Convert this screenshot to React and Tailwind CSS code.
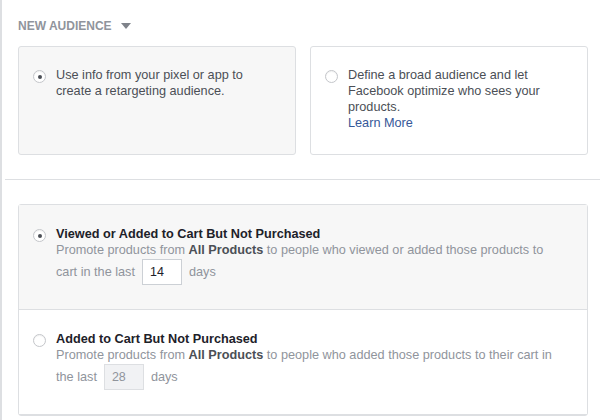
const font = { fontFamily: "Helvetica, 'Liberation Sans', Arial, sans-serif" };

const Radio = ({ checked }) => (
  <span className="mt-[3px] flex h-[13px] w-[13px] shrink-0 items-center justify-center rounded-full border border-[#c4c6ca] bg-white shadow-[inset_0_1px_1px_rgba(0,0,0,0.06)]">
    {checked && <span className="h-[4px] w-[4px] rounded-full bg-[#4b4f56]" />}
  </span>
);

const DaysInput = ({ value, disabled }) => (
  <span
    className={`mx-[7px] inline-flex h-[26px] w-[40px] items-center border px-[7px] align-middle text-[12.5px] ${
      disabled ? "border-[#dddfe2] bg-[#f1f2f4] text-[#90949c]" : "border-[#ccd0d5] bg-white text-[#1d2129]"
    }`}
  >
    {value}
  </span>
);

export default function App() {
  return (
    <div style={font} className="h-[420px] w-[600px] overflow-hidden border-l-[2px] border-[#dddfe2] bg-white text-[12.7px] text-[#4b4f56]">
      <div className="flex items-center gap-[9px] pl-[16px] pt-[17px] text-[12px] font-bold text-[#90949c]">
        NEW AUDIENCE
        <svg width="10" height="6" viewBox="0 0 10 6"><path d="M0 0h10L5 6z" fill="#7f838a" /></svg>
      </div>
      <div className="mt-[11px] flex gap-[14px] pl-[16px] pr-[12px]">
        <div className="flex h-[109px] flex-1 gap-[10px] rounded-[3px] border border-[#dddfe2] bg-[#f7f7f7] pl-[14px] pr-[8px] pt-[20px] leading-[16px]">
          <Radio checked />
          <span>Use info from your pixel or app to<br />create a retargeting audience.</span>
        </div>
        <div className="flex h-[109px] flex-1 gap-[10px] rounded-[3px] border border-[#dddfe2] bg-white pl-[14px] pr-[8px] pt-[20px] leading-[16px]">
          <Radio />
          <span>
            Define a broad audience and let<br />Facebook optimize who sees your<br />products.<br />
            <span className="text-[#365899]">Learn More</span>
          </span>
        </div>
      </div>
      <div className="mt-[24px] ml-[3px] border-t border-[#dddfe2]" />
      <div className="ml-[16px] mr-[12px] mt-[24px] rounded-[3px] border border-[#dddfe2]">
        <div className="flex h-[105px] gap-[10px] border-b border-[#dddfe2] bg-[#f7f7f7] pl-[14px] pt-[21px]">
          <Radio checked />
          <div className="leading-[16px]">
            <div className="font-bold text-[#1d2129]">Viewed or Added to Cart But Not Purchased</div>
            <div className="text-[#90949c]">
              Promote products from <b className="text-[#4b4f56]">All Products</b> to people who viewed or added those products to
            </div>
            <div className="mt-[1px] flex items-center text-[#90949c]">cart in the last<DaysInput value="14" />days</div>
          </div>
        </div>
        <div className="flex h-[105px] gap-[10px] border-b border-[#dddfe2] bg-white pl-[14px] pt-[21px]">
          <Radio />
          <div className="leading-[16px]">
            <div className="font-bold text-[#1d2129]">Added to Cart But Not Purchased</div>
            <div className="text-[#90949c]">
              Promote products from <b className="text-[#4b4f56]">All Products</b> to people who added those products to their cart in
            </div>
            <div className="mt-[1px] flex items-center text-[#90949c]">the last<DaysInput value="28" disabled />days</div>
          </div>
        </div>
      </div>
    </div>
  );
}
